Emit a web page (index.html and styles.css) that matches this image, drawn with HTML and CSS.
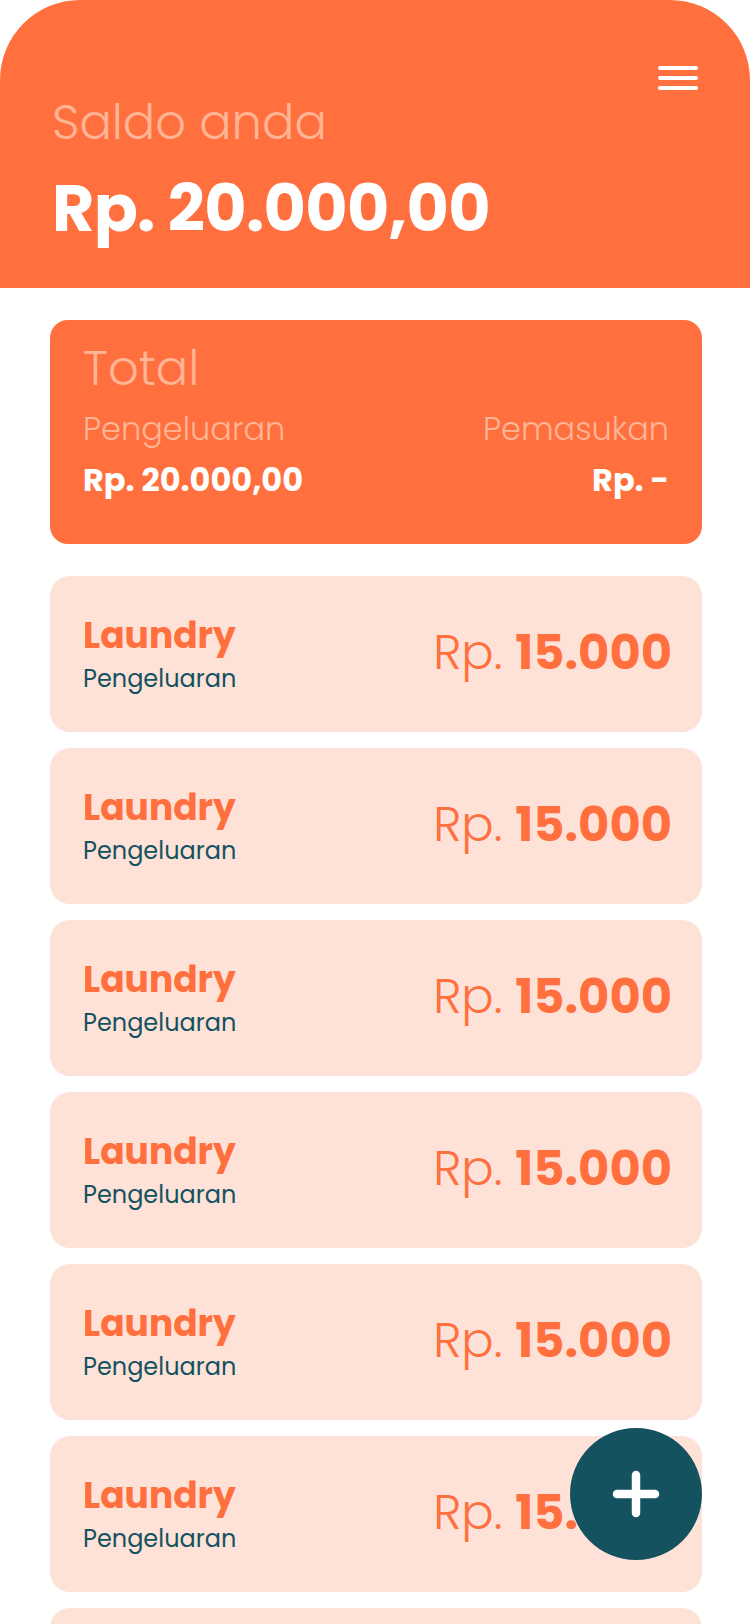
FILE: index.html
```html
<!DOCTYPE html>
<html lang="id">
<head>
<meta charset="utf-8">
<title>Saldo</title>
<link rel="stylesheet" href="styles.css">
</head>
<body>
<header class="header">
  <div class="menu-row">
    <span class="burger"><i></i><i></i><i></i></span>
  </div>
  <div class="saldo-label">Saldo anda</div>
  <div class="saldo-value">Rp. 20.000,00</div>
</header>
<main class="content">
  <section class="total">
    <div class="total-title">Total</div>
    <div class="total-row">
      <div class="col">
        <div class="col-label">Pengeluaran</div>
        <div class="col-value">Rp. 20.000,00</div>
      </div>
      <div class="col right">
        <div class="col-label">Pemasukan</div>
        <div class="col-value">Rp. -</div>
      </div>
    </div>
  </section>
  <ul class="list">
    <li class="item"><div class="item-info"><div class="item-name">Laundry</div><div class="item-type">Pengeluaran</div></div><div class="item-amount"><span class="cur">Rp.</span> <b>15.000</b></div></li>
    <li class="item"><div class="item-info"><div class="item-name">Laundry</div><div class="item-type">Pengeluaran</div></div><div class="item-amount"><span class="cur">Rp.</span> <b>15.000</b></div></li>
    <li class="item"><div class="item-info"><div class="item-name">Laundry</div><div class="item-type">Pengeluaran</div></div><div class="item-amount"><span class="cur">Rp.</span> <b>15.000</b></div></li>
    <li class="item"><div class="item-info"><div class="item-name">Laundry</div><div class="item-type">Pengeluaran</div></div><div class="item-amount"><span class="cur">Rp.</span> <b>15.000</b></div></li>
    <li class="item"><div class="item-info"><div class="item-name">Laundry</div><div class="item-type">Pengeluaran</div></div><div class="item-amount"><span class="cur">Rp.</span> <b>15.000</b></div></li>
    <li class="item"><div class="item-info"><div class="item-name">Laundry</div><div class="item-type">Pengeluaran</div></div><div class="item-amount"><span class="cur">Rp.</span> <b>15.000</b></div></li>
    <li class="item item-peek"></li>
  </ul>
</main>
<button class="fab" aria-label="Tambah">
  <svg width="48" height="48" viewBox="0 0 48 48"><path d="M24 5V43M5 24H43" stroke="#fff" stroke-width="8.5" stroke-linecap="round" fill="none"/></svg>
</button>
</body>
</html>
```
FILE: styles.css
```css
* { box-sizing: border-box; }
html, body { margin: 0; padding: 0; }
body {
  width: 750px;
  height: 1624px;
  overflow: hidden;
  background: #fff;
  font-family: "Poppins", "Inter", "DejaVu Sans", sans-serif;
}
.header {
  height: 288px;
  background: #FF703E;
  border-radius: 80px 80px 0 0;
  padding: 66px 52px 0 52px;
  display: flex;
  flex-direction: column;
}
.menu-row { display: flex; justify-content: flex-end; height: 24px; }
.burger { width: 40px; height: 24px; display: flex; flex-direction: column; justify-content: space-between; }
.burger i { display: block; height: 4px; border-radius: 2px; background: #fff; }
.saldo-label {
  margin-top: 3px;
  font-size: 48px;
  line-height: 60px;
  color: #FFB596;
  font-weight: 300;
}
.saldo-value {
  margin-top: 19px;
  font-size: 65px;
  line-height: 74px;
  color: #fff;
  font-weight: 700;
  letter-spacing: -0.7px;
}
.content { padding: 32px 48px 0 50px; }
.total {
  height: 224px;
  background: #FF703E;
  border-radius: 18px;
  padding: 21px 33px 0 33px;
}
.total-title { font-size: 48px; line-height: 56px; color: #FFB596; font-weight: 300; }
.total-row { display: flex; justify-content: space-between; margin-top: 11px; }
.col.right { text-align: right; }
.col-label { font-size: 32px; line-height: 42px; color: #FFB596; font-weight: 300; }
.col-value { font-size: 32px; line-height: 44px; color: #fff; font-weight: 700; margin-top: 8px; }
.list { list-style: none; margin: 32px 0 0; padding: 0; display: flex; flex-direction: column; gap: 16px; }
.item {
  height: 156px;
  flex: none;
  background: #FEE2D8;
  border-radius: 20px;
  padding: 0 30px 0 33px;
  display: flex;
  align-items: center;
  justify-content: space-between;
}
.item-name { font-size: 36px; line-height: 44px; color: #FF703E; font-weight: 700; }
.item-type { font-size: 24px; line-height: 32px; color: #15525F; margin-top: 5px; }
.item-amount { font-size: 48px; line-height: 58px; color: #FF703E; white-space: nowrap; margin-top: -2px; }
.item-amount .cur { font-weight: 300; }
.item-amount b { font-weight: 700; }
.fab {
  position: fixed;
  left: 570px;
  top: 1428px;
  width: 132px;
  height: 132px;
  border-radius: 50%;
  border: none;
  background: #15525F;
  display: flex;
  align-items: center;
  justify-content: center;
  padding: 0;
}
```
